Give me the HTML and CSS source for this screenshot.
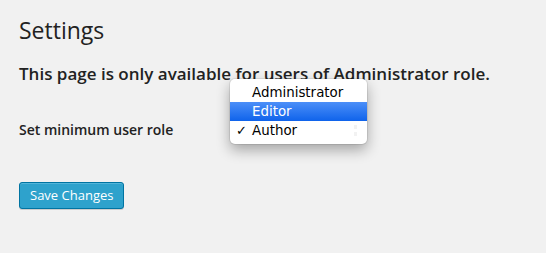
FILE: index.html
```html
<!DOCTYPE html>
<html lang="en">

<head>
    <meta charset="UTF-8">
    <meta name="viewport" content="width=device-width, initial-scale=1.0">
    <title>Settings</title>
    <link rel="stylesheet" href="styles.css">
</head>

<body>
    <div class="wrap">
        <h2>Settings</h2>
        <h3>This page is only available for users of Administrator role.</h3>

        <form class="settings-form">
            <div class="form-row">
                <label class="row-label">Set minimum user role</label>
                <div class="role-select">
                    <!-- menu desplegado del select -->
                    <ul class="role-menu">
                        <li>Administrator</li>
                        <li class="active">Editor</li>
                        <li class="checked">Author<span class="arrows"></span></li>
                    </ul>
                </div>
            </div>

            <button type="submit" class="button-primary">Save Changes</button>
        </form>
    </div>
</body>

</html>
```

FILE: styles.css
```css
body {
    font-family: "Open Sans", sans-serif;
    margin: 0;
    padding: 0;
    background-color: #f1f1f1;
    color: #222;
}

.wrap {
    padding: 12px 19px;
}

h2 {
    font-size: 23px;
    font-weight: 400;
    line-height: 29px;
    margin: 4px 0 0;
    color: #222;
}

h3 {
    font-size: 17px;
    font-weight: 600;
    line-height: 24px;
    margin: 17px 0 0;
    color: #222;
}

.form-row {
    display: flex;
    align-items: flex-start;
    margin-top: 34px;
    height: 50px;
}

.row-label {
    font-size: 14px;
    font-weight: 600;
    line-height: 20px;
    width: 211px;
}

/* Estilo del menu del select */

.role-select {
    position: relative;
}

.role-menu {
    position: absolute;
    left: 0;
    top: -41px;
    width: 137px;
    margin: 0;
    padding: 4px 0;
    list-style: none;
    background-color: #fff;
    border-radius: 5px;
    box-shadow: 0 0 0 1px rgba(0, 0, 0, 0.08), 0 6px 14px rgba(0, 0, 0, 0.32);
    font-family: "DejaVu Sans", sans-serif;
    font-size: 13.4px;
    color: #000;
    z-index: 1;
}

.role-menu li {
    position: relative;
    height: 19px;
    line-height: 19px;
    padding-left: 22px;
}

.role-menu li.active {
    background: linear-gradient(#4c8ff8, #0f63eb);
    color: #fff;
}

.role-menu li.checked::before {
    content: "\2713";
    position: absolute;
    left: 6px;
    font-size: 13px;
}

.arrows {
    position: absolute;
    right: 10px;
    top: 4px;
    width: 3px;
    height: 11px;
    border-top: 4px solid #f2f2f2;
    border-bottom: 4px solid #f2f2f2;
    box-sizing: border-box;
}

.button-primary {
    display: block;
    margin-top: 12px;
    height: 27px;
    padding: 0 10px 1px;
    font-family: "Open Sans", sans-serif;
    font-size: 13px;
    color: #fff;
    background-color: #2ea2cc;
    border: 1px solid #0074a2;
    border-radius: 3px;
    box-shadow: inset 0 1px 0 rgba(120, 200, 230, 0.5), 0 1px 0 rgba(0, 0, 0, 0.15);
    cursor: pointer;
}

.button-primary:hover {
    background-color: #1e8cbe;
}
```
